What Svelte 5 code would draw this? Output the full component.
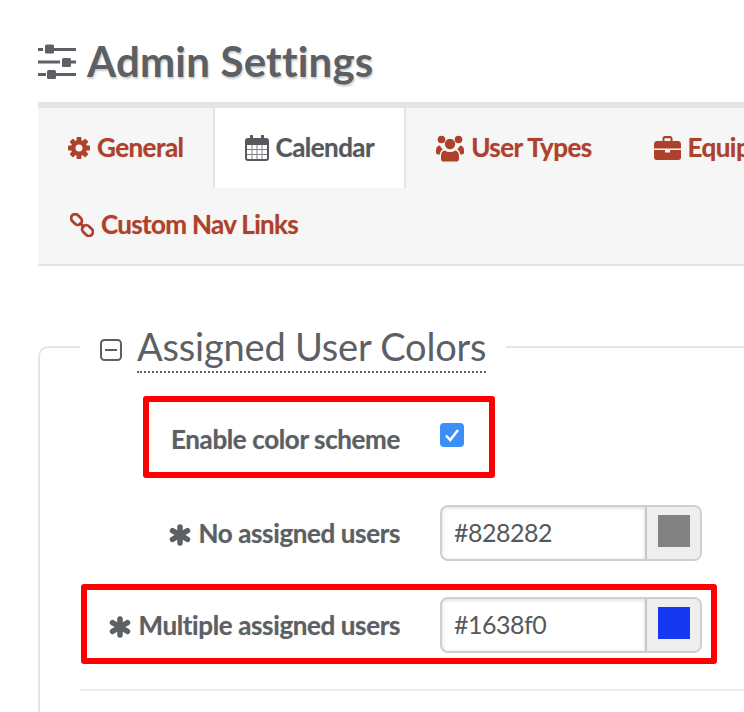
<script lang="ts">
  const tabs = [
    { id: "gear", label: "General" },
    { id: "calendar", label: "Calendar", active: true },
    { id: "users", label: "User Types" },
    { id: "briefcase", label: "Equipment" },
    { id: "link", label: "Custom Nav Links" },
  ];
  const colors = [
    { label: "No assigned users", value: "#828282" },
    { label: "Multiple assigned users", value: "#1638f0", marked: true },
  ];
</script>

{#snippet asterisk()}
  <svg class="star" viewBox="0 0 22 22" aria-hidden="true">
    <g stroke="currentColor" stroke-width="5.500" stroke-linecap="round">
      <path d="M11 3v16" />
      <path d="M3.500 6.700l15 8.600" />
      <path d="M18.500 6.700l-15 8.600" />
    </g>
  </svg>
{/snippet}

{#snippet icon(id: string)}
  {#if id === "gear"}
    <svg class="ic gear" viewBox="0 0 22 22" aria-hidden="true">
      <g fill="currentColor">
        {#each [0, 45, 90, 135, 180, 225, 270, 315] as a}
          <rect x="8.600" y="0" width="4.800" height="5" rx=".8" transform="rotate({a} 11 11)" />
        {/each}
      </g>
      <circle cx="11" cy="11" r="5.800" fill="none" stroke="currentColor" stroke-width="4.600" />
    </svg>
  {:else if id === "calendar"}
    <svg class="ic cal" viewBox="0 0 24 26" aria-hidden="true">
      <rect x="1" y="4" width="22" height="21" rx="2" fill="none" stroke="currentColor" stroke-width="2" />
      <rect x="1" y="4" width="22" height="6" fill="currentColor" />
      <path d="M6.500 1v6M17.500 1v6" stroke="currentColor" stroke-width="3" stroke-linecap="round" />
      <path d="M7 10v14M12 10v14M17 10v14M2 14.500h20M2 19.500h20" stroke="currentColor" stroke-width="1" opacity=".75" />
    </svg>
  {:else if id === "users"}
    <svg class="ic users" viewBox="0 0 28 27" aria-hidden="true">
      <g fill="currentColor">
        <circle cx="5.500" cy="4.500" r="3.800" />
        <circle cx="22.500" cy="4.500" r="3.800" />
        <circle cx="14" cy="9" r="5.200" />
        <path d="M0 15c0-3 2-4.500 4-4.500 .6 1.500 1.500 2.800 3 3.800-2 1.200-3 3-3.200 5.200H2c-1.300 0-2-.8-2-2z" />
        <path d="M28 15c0-3-2-4.500-4-4.500-.6 1.500-1.500 2.800-3 3.800 2 1.200 3 3 3.200 5.200H26c1.300 0 2-.8 2-2z" />
        <path d="M9 15.500c1.400 1 3 1.500 5 1.500s3.600-.5 5-1.500c2.500.2 4 2.300 4 5.500v3c0 1.500-1 2.600-2.500 2.600h-13C6 26.600 5 25.500 5 24v-3c0-3.200 1.500-5.300 4-5.500z" />
      </g>
    </svg>
  {:else if id === "briefcase"}
    <svg class="ic brief" viewBox="0 0 27 24" aria-hidden="true">
      <path
        fill="currentColor"
        d="M8.500 5V2.500C8.500 1 9.500 0 11 0h5c1.500 0 2.500 1 2.500 2.500V5H24c1.700 0 3 1.300 3 3v4.500H0V8c0-1.700 1.300-3 3-3zM10.500 5h6V2.200h-6zM0 14h11v2.500h5V14h11v7.500c0 1.400-1.100 2.500-2.500 2.500h-22C1.100 24 0 22.900 0 21.500z"
      />
    </svg>
  {:else if id === "link"}
    <svg class="ic link" viewBox="0 0 24 24" aria-hidden="true">
      <g fill="none" stroke="currentColor" stroke-width="2.800">
        <rect x="0.500" y="2.500" width="12" height="8" rx="4" transform="rotate(45 6.500 6.500)" />
        <rect x="11.500" y="13.500" width="12" height="8" rx="4" transform="rotate(45 17.500 17.500)" />
      </g>
      <path d="M9.500 9.500l5 5" stroke="currentColor" stroke-width="3" />
    </svg>
  {/if}
{/snippet}

<div class="page">
  <h1 class="title">
    <svg class="sliders" viewBox="0 0 38 36" aria-hidden="true">
      <g fill="#5c6064">
        <rect x="0" y="5" width="5" height="3" />
        <rect x="15" y="5" width="23" height="3" />
        <rect x="7" y="1.500" width="9" height="9" rx="1.500" />
        <rect x="0" y="17.500" width="22" height="3" />
        <rect x="33" y="17.500" width="5" height="3" />
        <rect x="24" y="15" width="9" height="9" rx="1.500" />
        <rect x="0" y="30" width="8" height="3" />
        <rect x="18" y="30" width="20" height="3" />
        <rect x="9" y="27" width="9" height="9" rx="1.500" />
      </g>
    </svg>
    Admin Settings
  </h1>

  <nav class="tabs">
    {#each tabs as tab}
      <a class="tab" class:active={tab.active} href="#{tab.id}">
        {@render icon(tab.id)}
        <span class="tab-label">{tab.label}</span>
      </a>
    {/each}
  </nav>

  <fieldset class="group">
    <legend class="legend">
      <svg class="toggle" viewBox="0 0 22 22" aria-hidden="true">
        <rect x="1" y="1" width="20" height="20" rx="3.500" fill="none" stroke="#5c6064" stroke-width="2" />
        <path d="M5 11h12" stroke="#5c6064" stroke-width="2" />
      </svg>
      <span class="legend-text">Assigned User Colors</span>
    </legend>

    <div class="row check-row">
      <span class="mark mark-check"></span>
      <span class="label">Enable color scheme</span>
      <span class="check">
        <svg viewBox="0 0 24 24" aria-hidden="true">
          <path d="M6 12.500l4.200 4.500L18 7" fill="none" stroke="#fff" stroke-width="2.500" />
        </svg>
      </span>
    </div>

    {#each colors as c}
      <div class="row">
        {#if c.marked}<span class="mark mark-color"></span>{/if}
        <span class="label">{@render asterisk()}<span class="label-text">{c.label}</span></span>
        <div class="color">
          <span class="value">{c.value}</span>
          <span class="addon"><span class="swatch" style="background: {c.value}"></span></span>
        </div>
      </div>
    {/each}

    <hr class="rule" />
  </fieldset>
</div>

<style>
  :global(body) {
    margin: 0;
    background: #fff;
  }

  .page {
    width: 744px;
    height: 712px;
    overflow: hidden;
    padding: 28px 0 0 38px;
    box-sizing: border-box;
    font-family: Lato, "Noto Sans", sans-serif;
    color: #5c6064;
  }

  .title {
    display: flex;
    align-items: center;
    gap: 11px;
    margin: 0;
    height: 74px;
    padding-bottom: 8px;
    box-sizing: border-box;
    font-size: 42px;
    line-height: 44px;
    font-weight: 700;
    letter-spacing: 0.2px;
    white-space: nowrap;
    text-shadow: 1px 2px 2px rgba(0, 0, 0, 0.2);
  }

  .sliders {
    width: 38px;
    height: 36px;
    flex: none;
  }

  .tabs {
    display: flex;
    flex-wrap: wrap;
    width: 900px;
    background: #f6f6f6;
    border-top: 6px solid #e4e4e4;
    border-bottom: 2px solid #e4e4e4;
    box-sizing: border-box;
    height: 164px;
  }

  .tab {
    display: flex;
    align-items: center;
    gap: 7px;
    height: 80px;
    padding: 0 30px;
    border-right: 2px solid transparent;
    box-sizing: border-box;
    color: #ad412b;
    font-size: 26px;
    font-weight: 700;
    letter-spacing: -0.55px;
    text-decoration: none;
    white-space: nowrap;
    text-shadow: 0 0 1px rgba(173, 65, 43, 0.45);
  }

  .tab-label {
    margin-top: -2px;
  }

  .tab:first-child {
    padding-right: 29px;
    border-right-color: #e4e4e4;
  }

  .tab.active {
    background: #fff;
    color: #55595e;
    border-right-color: #e4e4e4;
    text-shadow: 0 0 1px rgba(85, 89, 94, 0.45);
  }

  .tab:last-child {
    height: 76px;
    padding-left: 32px;
    padding-bottom: 2px;
    letter-spacing: -0.67px;
  }

  .ic {
    flex: none;
  }

  .gear {
    width: 22px;
    height: 22px;
  }

  .cal {
    width: 24px;
    height: 26px;
  }

  .users {
    width: 28px;
    height: 27px;
  }

  .brief {
    width: 27px;
    height: 24px;
  }

  .link {
    width: 24px;
    height: 24px;
  }

  .group {
    width: 900px;
    box-sizing: border-box;
    margin: 55px 0 0;
    padding: 0 0 100px 40px;
    border: 2px solid #e6e6e6;
    border-radius: 10px 0 0 0;
    min-width: 0;
  }

  .legend {
    display: flex;
    align-items: flex-start;
    gap: 15px;
    padding: 0 20px;
    height: 52px;
    color: #5c6064;
  }

  .toggle {
    width: 22px;
    height: 22px;
    margin-top: 18px;
  }

  .legend-text {
    font-size: 38px;
    line-height: 50px;
    height: 50px;
    letter-spacing: -0.2px;
    border-bottom: 2px dotted #5c6064;
    white-space: nowrap;
  }

  .row {
    position: relative;
    display: flex;
    align-items: center;
    height: 56px;
    margin-bottom: 36px;
  }

  .check-row {
    margin-top: 33px;
    margin-bottom: 33px;
    height: 66px;
  }

  .label {
    width: 320px;
    flex: none;
    text-align: right;
    font-size: 26px;
    font-weight: 700;
    letter-spacing: -0.38px;
    white-space: nowrap;
    text-shadow: 0 0 1px rgba(92, 96, 100, 0.45);
  }

  .label-text {
    margin-left: 8px;
  }

  .star {
    width: 22px;
    height: 22px;
    vertical-align: -3px;
  }

  .check {
    display: flex;
    width: 24px;
    height: 24px;
    margin: -8px 0 0 40px;
    border-radius: 4px;
    background: #3b8ff5;
  }

  .check svg {
    width: 24px;
    height: 24px;
  }

  .color {
    display: flex;
    width: 262px;
    height: 56px;
    margin-left: 40px;
    box-sizing: border-box;
    border: 2px solid #cfcfcf;
    border-radius: 8px;
    overflow: hidden;
  }

  .value {
    flex: 1;
    padding-left: 12px;
    font-size: 25px;
    line-height: 50px;
    letter-spacing: -0.5px;
    color: #55595e;
    box-shadow: inset 0 1px 4px rgba(0, 0, 0, 0.14);
  }

  .addon {
    display: flex;
    align-items: center;
    justify-content: center;
    width: 55px;
    box-sizing: border-box;
    background: #eeeeee;
    border-left: 2px solid #c8c8c8;
  }

  .swatch {
    width: 32px;
    height: 32px;
    margin-top: -4px;
  }

  /* red annotation frames drawn over the form */
  .mark {
    position: absolute;
    box-sizing: border-box;
    border: 6px solid #ff0000;
    border-radius: 3px;
    pointer-events: none;
  }

  .mark-check {
    left: 63px;
    top: -10px;
    width: 352px;
    height: 82px;
  }

  .mark-color {
    left: 1px;
    top: -13px;
    width: 636px;
    height: 80px;
  }

  .rule {
    margin: 0;
    border: 0;
    border-top: 2px solid #ececec;
  }
</style>
